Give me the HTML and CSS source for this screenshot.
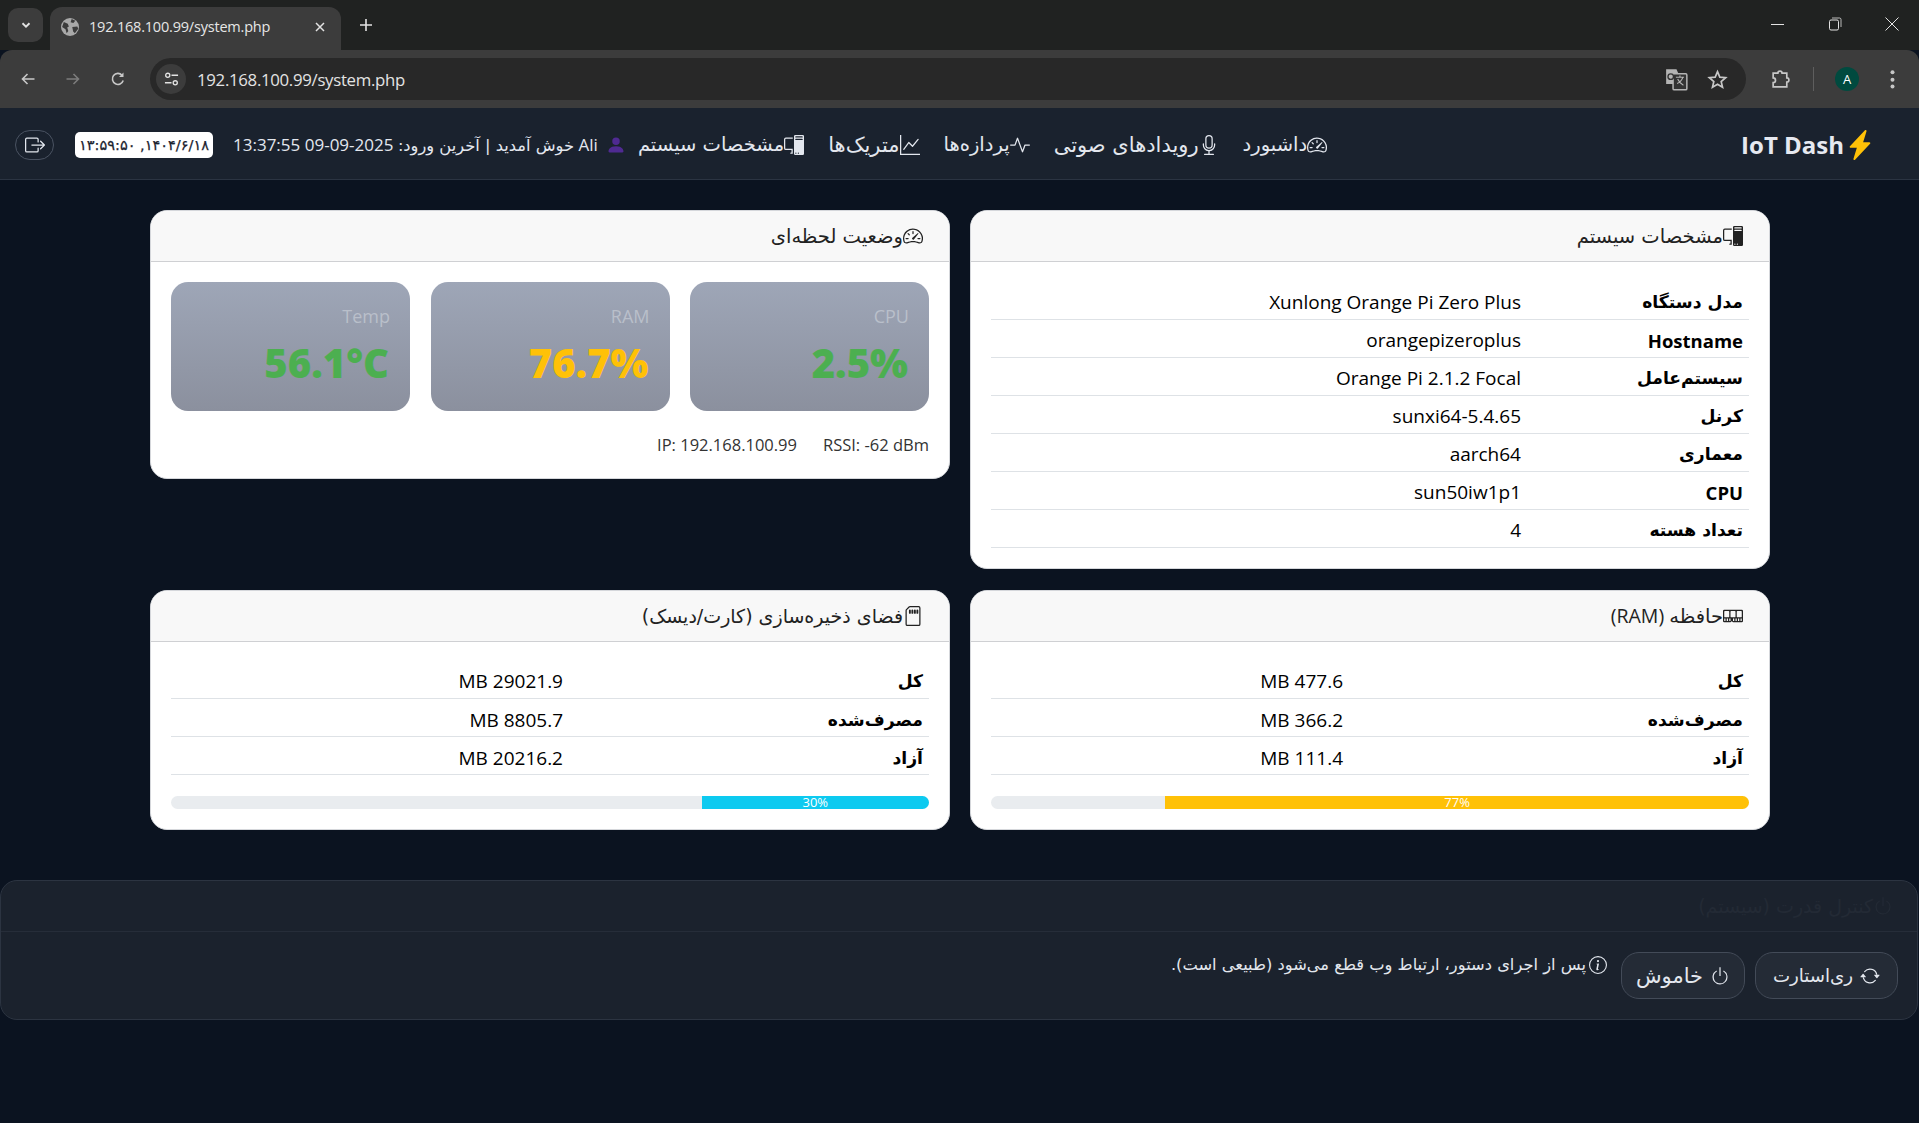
FILE: index.html
```html
<!DOCTYPE html>
<html lang="fa">
<head>
<meta charset="utf-8">
<title>System</title>
<link rel="stylesheet" href="styles.css">
</head>
<body>
<svg class="sprite" xmlns="http://www.w3.org/2000/svg">
  <symbol id="speed" viewBox="0 0 16 16"><path d="M8 4a.5.5 0 0 1 .5.5V6a.5.5 0 0 1-1 0V4.5A.5.5 0 0 1 8 4M3.732 5.732a.5.5 0 0 1 .707 0l.915.914a.5.5 0 1 1-.708.708l-.914-.915a.5.5 0 0 1 0-.707M2 10a.5.5 0 0 1 .5-.5h1.586a.5.5 0 0 1 0 1H2.5A.5.5 0 0 1 2 10m9.5 0a.5.5 0 0 1 .5-.5h1.5a.5.5 0 0 1 0 1H12a.5.5 0 0 1-.5-.5m.754-4.246a.39.39 0 0 0-.527-.02L7.547 9.31a.91.91 0 1 0 1.302 1.258l3.434-4.297a.39.39 0 0 0-.029-.518z"/><path fill-rule="evenodd" d="M0 10a8 8 0 1 1 15.547 2.661c-.442 1.253-1.845 1.602-2.932 1.25C11.309 13.488 9.475 13 8 13c-1.474 0-3.31.488-4.615.911-1.087.352-2.49.003-2.932-1.25A8 8 0 0 1 0 10m8-7a7 7 0 0 0-6.603 9.329c.203.575.923.876 1.68.63C4.397 12.533 6.358 12 8 12s3.604.532 4.923.96c.757.245 1.477-.056 1.68-.631A7 7 0 0 0 8 3"/></symbol>
  <symbol id="mic" viewBox="0 0 16 16"><path d="M3.5 6.5A.5.5 0 0 1 4 7v1a4 4 0 0 0 8 0V7a.5.5 0 0 1 1 0v1a5 5 0 0 1-4.5 4.975V15h3a.5.5 0 0 1 0 1h-7a.5.5 0 0 1 0-1h3v-2.025A5 5 0 0 1 3 8V7a.5.5 0 0 1 .5-.5"/><path d="M10 8a2 2 0 1 1-4 0V3a2 2 0 1 1 4 0zM8 0a3 3 0 0 0-3 3v5a3 3 0 0 0 6 0V3a3 3 0 0 0-3-3"/></symbol>
  <symbol id="activity" viewBox="0 0 16 16"><path fill-rule="evenodd" d="M6 2a.5.5 0 0 1 .47.33L10 12.036l1.53-4.208A.5.5 0 0 1 12 7.5h3.5a.5.5 0 0 1 0 1h-3.15l-1.88 5.17a.5.5 0 0 1-.94 0L6 3.964 4.47 8.171A.5.5 0 0 1 4 8.5H.5a.5.5 0 0 1 0-1h3.15l1.88-5.17A.5.5 0 0 1 6 2"/></symbol>
  <symbol id="graph" viewBox="0 0 16 16"><path fill-rule="evenodd" d="M0 0h1v15h15v1H0zm14.817 3.113a.5.5 0 0 1 .07.704l-4.5 5.5a.5.5 0 0 1-.74.037L7.06 6.767l-3.656 5.027a.5.5 0 0 1-.808-.588l4-5.5a.5.5 0 0 1 .758-.06l2.609 2.61 4.15-5.073a.5.5 0 0 1 .704-.07"/></symbol>
  <symbol id="pc" viewBox="0 0 16 16"><path d="M8 1a1 1 0 0 1 1-1h6a1 1 0 0 1 1 1v14a1 1 0 0 1-1 1H9a1 1 0 0 1-1-1zm1 13.500a.5.5 0 1 0 1 0 .5.5 0 0 0-1 0m2 0a.5.5 0 1 0 1 0 .5.5 0 0 0-1 0M9.500 1a.5.5 0 0 0 0 1h5a.5.5 0 0 0 0-1zM9 3.500a.5.5 0 0 0 .5.5h5a.5.5 0 0 0 0-1h-5a.5.5 0 0 0-.5.5M1.500 2A1.500 1.500 0 0 0 0 3.500v7A1.500 1.500 0 0 0 1.500 12H6v2h-.5a.5.5 0 0 0 0 1H7v-4H1.500a.5.5 0 0 1-.5-.5v-7a.5.5 0 0 1 .5-.5H7V2z"/></symbol>
  <symbol id="person" viewBox="0 0 16 16"><path d="M3 14s-1 0-1-1 1-4 6-4 6 3 6 4-1 1-1 1zm5-6a3 3 0 1 0 0-6 3 3 0 0 0 0 6"/></symbol>
  <symbol id="logout" viewBox="0 0 16 16"><path fill-rule="evenodd" d="M10 12.500a.5.5 0 0 1-.5.5h-8a.5.5 0 0 1-.5-.5v-9a.5.5 0 0 1 .5-.5h8a.5.5 0 0 1 .5.5v2a.5.5 0 0 0 1 0v-2A1.500 1.500 0 0 0 9.500 2h-8A1.500 1.500 0 0 0 0 3.500v9A1.500 1.500 0 0 0 1.500 14h8a1.500 1.500 0 0 0 1.500-1.500v-2a.5.5 0 0 0-1 0z"/><path fill-rule="evenodd" d="M15.854 8.354a.5.5 0 0 0 0-.708l-3-3a.5.5 0 0 0-.708.708L14.293 7.500H5.500a.5.5 0 0 0 0 1h8.793l-2.147 2.146a.5.5 0 0 0 .708.708z"/></symbol>
  <symbol id="bolt" viewBox="0 0 16 16"><path d="M11.251.068a.5.5 0 0 1 .227.58L9.677 6.500H13a.5.5 0 0 1 .364.843l-8 8.500a.5.5 0 0 1-.842-.49L6.323 9.500H3a.5.5 0 0 1-.364-.843l8-8.500a.5.5 0 0 1 .615-.09z"/></symbol>
  <symbol id="sd" viewBox="0 0 16 16"><path d="M6.250 3.500a.75.75 0 0 0-1.500 0v2a.75.75 0 0 0 1.500 0zm2 0a.75.75 0 0 0-1.500 0v2a.75.75 0 0 0 1.500 0zm2 0a.75.75 0 0 0-1.500 0v2a.75.75 0 0 0 1.500 0zm2 0a.75.75 0 0 0-1.500 0v2a.75.75 0 0 0 1.500 0z"/><path fill-rule="evenodd" d="M5.586 0a1.500 1.500 0 0 0-1.060.44L2.439 2.527A1.500 1.500 0 0 0 2 3.586V14.500A1.500 1.500 0 0 0 3.500 16h9a1.500 1.500 0 0 0 1.500-1.500v-13A1.500 1.500 0 0 0 12.500 0zm-.354 1.146a.5.5 0 0 1 .354-.146H12.500a.5.5 0 0 1 .5.5v13a.5.5 0 0 1-.5.5h-9a.5.5 0 0 1-.5-.5V3.586a.5.5 0 0 1 .146-.354z"/></symbol>
  <symbol id="memory" viewBox="0 0 16 16"><path d="M1 3a1 1 0 0 0-1 1v8a1 1 0 0 0 1 1h4.586a1 1 0 0 0 .707-.293l.353-.353a.5.5 0 0 1 .708 0l.353.353a1 1 0 0 0 .707.293H15a1 1 0 0 0 1-1V4a1 1 0 0 0-1-1zm.5 1h3a.5.5 0 0 1 .5.5v4a.5.5 0 0 1-.5.5h-3a.5.5 0 0 1-.5-.5v-4a.5.5 0 0 1 .5-.5m5 0h3a.5.5 0 0 1 .5.5v4a.5.5 0 0 1-.5.5h-3a.5.5 0 0 1-.5-.5v-4a.5.5 0 0 1 .5-.5m4.500.5a.5.5 0 0 1 .5-.5h3a.5.5 0 0 1 .5.5v4a.5.5 0 0 1-.5.5h-3a.5.5 0 0 1-.5-.5zM2 10v2H1v-2zm2 0v2H3v-2zm2 0v2H5v-2zm3 0v2H8v-2zm2 0v2h-1v-2zm2 0v2h-1v-2zm2 0v2h-1v-2z"/></symbol>
  <symbol id="power" viewBox="0 0 16 16"><path d="M7.500 1v7h1V1z"/><path d="M3 8.812a5 5 0 0 1 2.578-4.375l-.485-.874A6 6 0 1 0 11 3.616l-.501.865A5 5 0 1 1 3 8.812"/></symbol>
  <symbol id="repeat" viewBox="0 0 16 16"><path d="M11.534 7h3.932a.25.25 0 0 1 .192.41l-1.966 2.360a.25.25 0 0 1-.384 0l-1.966-2.360a.25.25 0 0 1 .192-.41m-11 2h3.932a.25.25 0 0 0 .192-.41L2.692 6.230a.25.25 0 0 0-.384 0L.342 8.590A.25.25 0 0 0 .534 9"/><path fill-rule="evenodd" d="M8 3c-1.552 0-2.940.707-3.857 1.818a.5.5 0 1 1-.771-.636A6.002 6.002 0 0 1 13.917 7H12.900A5 5 0 0 0 8 3M3.100 9a5.002 5.002 0 0 0 8.757 2.182.5.5 0 1 1 .771.636A6.002 6.002 0 0 1 2.083 9z"/></symbol>
  <symbol id="info" viewBox="0 0 16 16"><path d="M8 15A7 7 0 1 1 8 1a7 7 0 0 1 0 14m0 1A8 8 0 1 0 8 0a8 8 0 0 0 0 16"/><path d="m8.930 6.588-2.290.287-.082.38.45.083c.294.07.352.176.288.469l-.738 3.468c-.194.897.105 1.319.808 1.319.545 0 1.178-.252 1.465-.598l.088-.416c-.2.176-.492.246-.686.246-.275 0-.375-.193-.304-.533zM9 4.500a1 1 0 1 1-2 0 1 1 0 0 1 2 0"/></symbol>
</svg>

<div class="browser">
  <div class="tabstrip">
    <button class="tabmenu"><svg class="cicon12" viewBox="0 0 12 12"><path d="M3 4.500 6 7.500 9 4.500" fill="none" stroke="#e3e3e3" stroke-width="1.600"/></svg></button>
    <div class="tab">
      <svg class="globe" viewBox="0 0 16 16"><circle cx="8" cy="8" r="8" fill="#a9a9a9"/><path d="M2.500 3.500 6 5l1 2.500-1.500 1 1 3-1.500 2-1-3.500-3-2zM9.500.8l3.200 1.600-1.700 2-2.500-.6zM10 8l4.500-.5.8 2-3 4-1.500-1.500z" fill="#3c3c3c"/></svg>
      <span class="tabtitle">192.168.100.99/system.php</span>
      <svg class="tabclose" viewBox="0 0 12 12"><path d="M2 2 10 10M10 2 2 10" stroke="#e3e3e3" stroke-width="1.500"/></svg>
    </div>
    <svg class="newtab" viewBox="0 0 14 14"><path d="M7 1V13M1 7H13" stroke="#e3e3e3" stroke-width="1.600"/></svg>
    <div class="winbtns">
      <svg class="winicon" viewBox="0 0 14 14"><path d="M0 7.500H13" stroke="#e3e3e3" stroke-width="1"/></svg>
      <svg class="winicon" viewBox="0 0 14 14"><rect x="1.500" y="3" width="9" height="10" rx="1.500" fill="none" stroke="#e3e3e3"/><path d="M4 1H11.500A1.500 1.500 0 0 1 13 2.500V10" fill="none" stroke="#e3e3e3" stroke-width=".8"/></svg>
      <svg class="winicon" viewBox="0 0 14 14"><path d="M.5.5 13.500 13.500M13.500.5 .5 13.500" stroke="#e3e3e3" stroke-width="1"/></svg>
    </div>
  </div>
  <div class="toolbar">
    <svg class="navic" viewBox="0 0 16 16"><path d="M14.500 8H2.500M7.500 3 2.500 8l5 5" fill="none" stroke="#c7c7c7" stroke-width="1.600"/></svg>
    <svg class="navic" viewBox="0 0 16 16"><path d="M1.500 8H13.500M8.500 3l5 5-5 5" fill="none" stroke="#7c7c7c" stroke-width="1.600"/></svg>
    <svg class="navic" viewBox="0 0 16 16"><path d="M13.200 9.500A5.500 5.500 0 1 1 12 4.200" fill="none" stroke="#c7c7c7" stroke-width="1.600"/><path d="M13.500 1.500V6H9z" fill="#c7c7c7"/></svg>
    <div class="omnibox">
      <span class="sitebtn"><svg class="siteic" viewBox="0 0 16 16"><circle cx="4" cy="3.500" r="2.200" fill="none" stroke="#e3e3e3" stroke-width="1.400"/><path d="M8 3.500H15M1 11.500H8" stroke="#e3e3e3" stroke-width="1.500"/><circle cx="12" cy="11.500" r="2.200" fill="none" stroke="#e3e3e3" stroke-width="1.400"/></svg></span>
      <span class="url">192.168.100.99/system.php</span>
      <svg class="translate" viewBox="0 0 20 20"><path d="M1 1h9l1.500 3.500V14H1z" fill="#b4b4b4"/><rect x="7" y="5" width="12" height="14" rx="1" fill="#333" stroke="#b4b4b4" stroke-width="1.300"/><path d="M9.500 8h7M13 6.500V8M15.500 8c-.5 2.500-3 5-5 5.500M11 9.500c1 2 3 4.500 5 5.500" fill="none" stroke="#b4b4b4"/><circle cx="5" cy="7.500" r="2.400" fill="none" stroke="#333" stroke-width="1.200"/></svg>
      <svg class="star" viewBox="0 0 20 20"><path d="M10 2.500 12.200 7.700 17.800 8.200 13.500 11.900 14.800 17.400 10 14.500 5.200 17.400 6.500 11.900 2.200 8.200 7.800 7.700z" fill="none" stroke="#c7c7c7" stroke-width="1.600"/></svg>
    </div>
    <svg class="ext" viewBox="0 0 20 20"><path d="M3 4h4.500a2 2 0 0 1 4 0H16v4.500a2 2 0 0 1 0 4V17H3v-4a2 2 0 0 0 0-4.500z" fill="none" stroke="#c7c7c7" stroke-width="1.600"/></svg>
    <span class="tbsep"></span>
    <span class="avatar">A</span>
    <svg class="kebab" viewBox="0 0 4 16"><circle cx="2" cy="2.500" r="1.600" fill="#c7c7c7"/><circle cx="2" cy="8.500" r="1.600" fill="#c7c7c7"/><circle cx="2" cy="14" r="1.600" fill="#c7c7c7"/></svg>
  </div>
</div>

<div class="page" dir="rtl">
  <header class="navbar">
    <a class="brand"><svg class="boltic"><use href="#bolt"/></svg><span>IoT Dash</span></a>
    <div class="navright">
      <nav class="navlinks">
        <a class="navlink"><svg class="ic"><use href="#speed"/></svg><span class="fa">داشبورد</span></a>
        <a class="navlink"><svg class="ic"><use href="#mic"/></svg><span class="fa nav-wide">رویدادهای صوتی</span></a>
        <a class="navlink"><svg class="ic"><use href="#activity"/></svg><span class="fa">پردازه‌ها</span></a>
        <a class="navlink"><svg class="ic"><use href="#graph"/></svg><span class="fa nav-wide">متریک‌ها</span></a>
        <a class="navlink"><svg class="ic"><use href="#pc"/></svg><span class="fa">مشخصات سیستم</span></a>
      </nav>
      <svg class="useric"><use href="#person"/></svg>
      <span class="welcome">Ali <span class="fa welcome-fa">خوش آمدید | آخرین ورود:</span> 2025-09-09 13:37:55</span>
      <span class="clock">۱۴۰۴/۶/۱۸, ۱۳:۵۹:۵۰</span>
      <button class="logout"><svg class="logoutic"><use href="#logout"/></svg></button>
    </div>
  </header>

  <main class="grid">
    <section class="card">
      <h2 class="cardhead"><svg class="ic"><use href="#pc"/></svg><span class="fa">مشخصات سیستم</span></h2>
      <div class="cardbody">
        <table class="kv kv-spec">
          <tr><th class="fa">مدل دستگاه</th><td>Xunlong Orange Pi Zero Plus</td></tr>
          <tr><th>Hostname</th><td>orangepizeroplus</td></tr>
          <tr><th class="fa">سیستم‌عامل</th><td>Orange Pi 2.1.2 Focal</td></tr>
          <tr><th class="fa">کرنل</th><td>sunxi64-5.4.65</td></tr>
          <tr><th class="fa">معماری</th><td>aarch64</td></tr>
          <tr><th>CPU</th><td>sun50iw1p1</td></tr>
          <tr><th class="fa">تعداد هسته</th><td>4</td></tr>
        </table>
      </div>
    </section>

    <section class="card">
      <h2 class="cardhead"><svg class="ic"><use href="#speed"/></svg><span class="fa">وضعیت لحظه‌ای</span></h2>
      <div class="cardbody">
        <div class="tiles">
          <div class="tile"><div class="tilelabel">CPU</div><div class="tilevalue ok">2.5%</div></div>
          <div class="tile"><div class="tilelabel">RAM</div><div class="tilevalue warn">76.7%</div></div>
          <div class="tile"><div class="tilelabel">Temp</div><div class="tilevalue ok">56.1°C</div></div>
        </div>
        <div class="netinfo"><span>RSSI: -62 dBm</span><span>IP: 192.168.100.99</span></div>
      </div>
    </section>

    <section class="card">
      <h2 class="cardhead"><svg class="ic"><use href="#memory"/></svg><span><span class="fa">حافظه</span> (RAM)</span></h2>
      <div class="cardbody">
        <table class="kv kv-ram">
          <tr><th class="fa">کل</th><td>477.6 MB</td></tr>
          <tr><th class="fa">مصرف‌شده</th><td>366.2 MB</td></tr>
          <tr><th class="fa">آزاد</th><td>111.4 MB</td></tr>
        </table>
        <div class="bar"><div class="fill amber" style="width:77%">77%</div></div>
      </div>
    </section>

    <section class="card">
      <h2 class="cardhead"><svg class="ic"><use href="#sd"/></svg><span class="fa head-tight">فضای ذخیره‌سازی (کارت/دیسک)</span></h2>
      <div class="cardbody">
        <table class="kv kv-disk">
          <tr><th class="fa">کل</th><td>29021.9 MB</td></tr>
          <tr><th class="fa">مصرف‌شده</th><td>8805.7 MB</td></tr>
          <tr><th class="fa">آزاد</th><td>20216.2 MB</td></tr>
        </table>
        <div class="bar"><div class="fill cyan" style="width:30%">30%</div></div>
      </div>
    </section>
  </main>

  <section class="powercard">
    <h2 class="powerhead"><svg class="ic"><use href="#power"/></svg><span class="fa">کنترل قدرت (سیستم)</span></h2>
    <div class="powerbody">
      <button class="pbtn pbtn-restart"><svg class="ic"><use href="#repeat"/></svg><span class="fa">ری‌استارت</span></button>
      <button class="pbtn pbtn-off"><svg class="ic"><use href="#power"/></svg><span class="fa">خاموش</span></button>
      <p class="note"><svg class="ic"><use href="#info"/></svg><span class="fa">پس از اجرای دستور، ارتباط وب قطع می‌شود (طبیعی است).</span></p>
    </div>
  </section>
</div>
</body>
</html>
```
FILE: styles.css
```css
* { box-sizing: border-box; }
html, body { margin: 0; padding: 0; }
body {
  background: #0b1320;
  font-family: "Open Sans", "DejaVu Sans", sans-serif;
  font-size: 17.6px;
  color: #111;
  min-height: 1123px;
}
.sprite { display: none; }
svg { fill: currentColor; flex: none; display: block; }
h2, p { margin: 0; font-weight: 400; }
button { font: inherit; color: inherit; }
.fa { font-family: "DejaVu Sans", sans-serif; }

/* browser chrome */
.browser { font-family: "Open Sans", sans-serif; color: #e3e3e3; }
.tabstrip { height: 50px; background: #202221; display: flex; align-items: flex-end; padding-left: 8px; }
.tabmenu { width: 35px; height: 34px; align-self: flex-start; margin-top: 8px; background: #3c3c3c; border: 0; border-radius: 10px; display: flex; align-items: center; justify-content: center; padding: 0; }
.cicon12 { width: 14px; height: 14px; }
.tab { width: 291px; height: 43px; margin-left: 7px; background: #3c3c3c; border-radius: 12px 12px 0 0; display: flex; align-items: center; padding: 0 15px 4px 11px; gap: 10px; }
.globe { width: 18px; height: 18px; }
.tabtitle { font-size: 14.5px; flex: 1; color: #e6e6e6; letter-spacing: -.2px; }
.tabclose { width: 12px; height: 12px; margin-left: 8px; }
.newtab { width: 14px; height: 14px; margin: 0 0 18px 18px; }
.winbtns { margin-left: auto; display: flex; gap: 43px; padding: 0 20px 3px 0; align-self: center; }
.winicon { width: 14px; height: 14px; }
.toolbar { height: 58px; background: #3c3c3c; border-radius: 12px 12px 0 0; display: flex; align-items: center; padding: 0 0 0 20px; }
.navic { width: 16px; height: 16px; margin-right: 29px; }
.navic:nth-of-type(3) { margin-right: 24px; }
.omnibox { width: 1596px; height: 42px; background: #282828; border-radius: 21px; display: flex; align-items: center; padding: 0 18px 0 6px; }
.sitebtn { width: 30px; height: 30px; border-radius: 50%; background: #3c3c3c; display: flex; align-items: center; justify-content: center; }
.siteic { width: 15px; height: 15px; }
.url { font-size: 16.8px; margin-left: 11px; flex: 1; letter-spacing: -.3px; }
.translate { width: 23px; height: 23px; margin-right: 19px; }
.star { width: 21px; height: 21px; }
.ext { width: 21px; height: 21px; margin-left: 24px; }
.tbsep { width: 1px; height: 24px; background: #5e5e5e; margin-left: 22px; }
.avatar { width: 24px; height: 24px; border-radius: 50%; background: #004a3f; color: #fff; font-size: 13px; display: flex; align-items: center; justify-content: center; margin-left: 21px; }
.kebab { width: 5px; height: 20px; margin-left: 31px; }

/* top nav */
.navbar { height: 72px; background: #1a222e; border-bottom: 1px solid #2b3442; display: flex; align-items: center; justify-content: space-between; padding: 2px 43px 0 15px; color: #e3e7ee; }
.brand { display: flex; align-items: center; gap: 0; font-weight: 700; font-size: 24px; color: #e6e9f0; }
.boltic { width: 32px; height: 30px; color: #ffc107; }
.navright { display: flex; align-items: center; }
.navlinks { display: flex; gap: 24px; margin-left: 12px; }
.navlink { display: flex; align-items: center; font-size: 19.5px; }
.nav-wide { font-size: 21px; }
.navlink .ic { width: 20px; height: 20px; }
.useric { width: 20px; height: 20px; color: #4f2a92; margin-left: 8px; }
.welcome { font-size: 17px; margin-left: 20px; white-space: nowrap; }
.welcome-fa { font-size: 16.3px; }
.clock { background: #fff; color: #1a222e; border-radius: 5px; height: 26px; width: 138px; display: flex; align-items: center; justify-content: center; font-family: "DejaVu Sans", sans-serif; font-size: 14.5px; font-weight: 400; -webkit-text-stroke: .25px #1a222e; margin-left: 21px; }
.logout { width: 39px; height: 30px; background: transparent; border: 1px solid #4a5362; border-radius: 15px; display: flex; align-items: center; justify-content: center; padding: 0; color: #e3e7ee; }
.logoutic { width: 20px; height: 20px; }

/* grid */
.grid { display: grid; grid-template-columns: 800px 800px; gap: 21px 20px; padding: 30px 149px 0; align-items: start; }
.card { background: #fff; border: 1px solid #d5d7db; border-radius: 17px; overflow: hidden; }
.cardhead { height: 51px; background: #f8f8f8; border-bottom: 1px solid #cfd0d3; display: flex; align-items: center; padding: 0 26px; font-size: 19.5px; color: #222; }
.head-tight { font-size: 19px; }
.cardhead .ic { width: 20px; height: 20px; }
.cardbody { padding: 20px; }
.kv { width: 100%; margin: -1px 0 0; border-collapse: collapse; font-size: 19px; }
.kv th, .kv td { height: 38px; border-bottom: 1px solid #dee2e6; padding: 4px 6px 0 0; text-align: right; color: #000; white-space: nowrap; }
.kv td { padding-right: 0; }
.kv th { font-weight: 700; font-size: 18.5px; }
.kv th.fa { font-size: 17.2px; }
.kv-spec th { width: 228px; }
.kv-ram th { width: 406px; }
.kv-disk th { width: 366px; }
.tiles { display: grid; grid-template-columns: repeat(3, 239px); gap: 20.500px; }
.tile { height: 129px; background: linear-gradient(#9ea6b7, #8b909e); border-radius: 17px; padding: 20px; }
.tilelabel { color: #b9bfca; font-size: 18px; line-height: 28px; }
.tilevalue { font-size: 40px; font-weight: 800; line-height: 50px; margin: 8px 1px 0 0; }
.ok { color: #4caf50; }
.warn { color: #ffc107; }
.netinfo { display: flex; gap: 26px; margin-top: 21px; font-size: 16.5px; color: #333; line-height: 26px; }
.bar { height: 13px; margin-top: 21px; background: #e9ecef; border-radius: 7px; display: flex; }
.fill { height: 13px; color: #fff; font-size: 13px; line-height: 13px; text-align: center; border-radius: 0 7px 7px 0; }
.amber { background: #ffc107; }
.cyan { background: #0dcaf0; }

/* power card */
.powercard { margin: 50px 1px 0 0; height: 140px; background: #1b222d; border: 1px solid #2c3441; border-radius: 17px; overflow: hidden; }
.powerhead { height: 51px; border-bottom: 1px solid #262d39; display: flex; align-items: center; padding: 0 24px; font-size: 19px; color: #232a35; }
.powerhead .ic { width: 20px; height: 20px; }
.powerbody { display: flex; align-items: flex-start; padding: 20px 19px 0; gap: 10px; color: #e3e7ee; }
.pbtn { height: 47px; border-radius: 18px; background: #242b36; border: 1px solid #434b58; display: flex; align-items: center; justify-content: center; gap: 7px; padding: 0; font-size: 18.2px; color: #e3e7ee; }
.pbtn .ic { width: 20px; height: 20px; }
.pbtn-restart { width: 143px; }
.pbtn-off { width: 124px; font-size: 21px; }
.note { display: flex; align-items: center; gap: 3px; font-size: 16.300px; margin: 3px 4px 0 0; }
.note .ic { width: 18px; height: 18px; }
```
